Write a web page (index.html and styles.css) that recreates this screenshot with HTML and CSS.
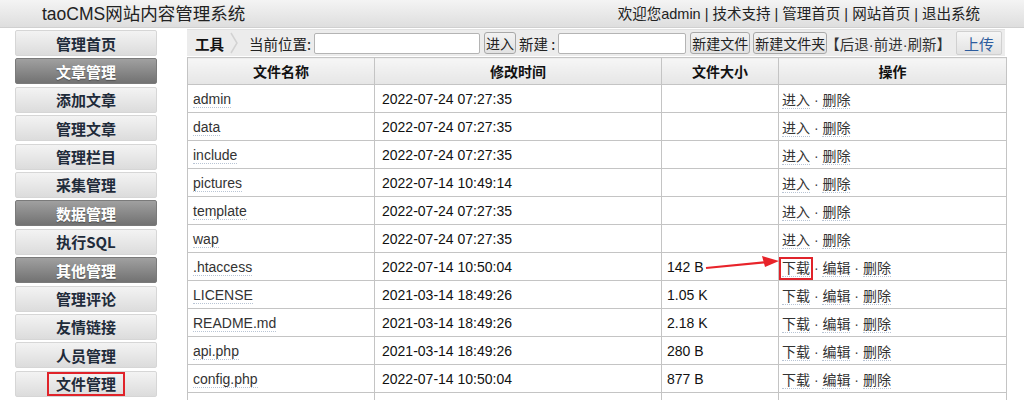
FILE: index.html
```html
<!DOCTYPE html>
<html lang="zh-CN">
<head>
<meta charset="utf-8">
<title>taoCMS网站内容管理系统</title>
<link rel="stylesheet" href="styles.css">
</head>
<body>
<div class="page">
  <header class="top">
    <h1 class="logo">taoCMS网站内容管理系统</h1>
    <nav class="toplinks">欢迎您admin | <a>技术支持</a> | <a>管理首页</a> | <a>网站首页</a> | <a>退出系统</a></nav>
  </header>
  <div class="wrap">
    <aside class="side">
      <a class="item">管理首页</a>
      <a class="item dark">文章管理</a>
      <a class="item">添加文章</a>
      <a class="item">管理文章</a>
      <a class="item">管理栏目</a>
      <a class="item">采集管理</a>
      <a class="item dark">数据管理</a>
      <a class="item">执行SQL</a>
      <a class="item dark">其他管理</a>
      <a class="item">管理评论</a>
      <a class="item">友情链接</a>
      <a class="item">人员管理</a>
      <a class="item"><span class="mark">文件管理</span></a>
    </aside>
    <main class="main">
      <div class="toolbar">
        <b class="tool">工具</b>
        <svg class="chev" width="10" height="26" viewBox="0 0 10 26"><polyline points="2,3 8,13 2,23" fill="none" stroke="#d2d2d2" stroke-width="1.5"/></svg>
        <span class="lbl">当前位置:</span>
        <input class="inp path" type="text">
        <button class="btn">进入</button>
        <span class="lbl">新建 :</span>
        <input class="inp name" type="text">
        <button class="btn">新建文件</button>
        <button class="btn">新建文件夹</button>
        <span class="nav">【后退·前进·刷新】</span>
        <button class="upload">上传</button>
      </div>
      <table class="files">
        <thead>
          <tr><th class="c1">文件名称</th><th class="c2">修改时间</th><th class="c3">文件大小</th><th class="c4">操作</th></tr>
        </thead>
        <tbody>
          <tr><td><a>admin</a></td><td>2022-07-24 07:27:35</td><td></td><td><a>进入</a> · <a>删除</a></td></tr>
          <tr><td><a>data</a></td><td>2022-07-24 07:27:35</td><td></td><td><a>进入</a> · <a>删除</a></td></tr>
          <tr><td><a>include</a></td><td>2022-07-24 07:27:35</td><td></td><td><a>进入</a> · <a>删除</a></td></tr>
          <tr><td><a>pictures</a></td><td>2022-07-14 10:49:14</td><td></td><td><a>进入</a> · <a>删除</a></td></tr>
          <tr><td><a>template</a></td><td>2022-07-24 07:27:35</td><td></td><td><a>进入</a> · <a>删除</a></td></tr>
          <tr><td><a>wap</a></td><td>2022-07-24 07:27:35</td><td></td><td><a>进入</a> · <a>删除</a></td></tr>
          <tr><td><a>.htaccess</a></td><td>2022-07-14 10:50:04</td><td>142 B</td><td><a class="mark2">下载</a> · <a>编辑</a> · <a>删除</a></td></tr>
          <tr><td><a>LICENSE</a></td><td>2021-03-14 18:49:26</td><td>1.05 K</td><td><a>下载</a> · <a>编辑</a> · <a>删除</a></td></tr>
          <tr><td><a>README.md</a></td><td>2021-03-14 18:49:26</td><td>2.18 K</td><td><a>下载</a> · <a>编辑</a> · <a>删除</a></td></tr>
          <tr><td><a>api.php</a></td><td>2021-03-14 18:49:26</td><td>280 B</td><td><a>下载</a> · <a>编辑</a> · <a>删除</a></td></tr>
          <tr><td><a>config.php</a></td><td>2022-07-14 10:50:04</td><td>877 B</td><td><a>下载</a> · <a>编辑</a> · <a>删除</a></td></tr>
          <tr><td></td><td></td><td></td><td></td></tr>
        </tbody>
      </table>
    </main>
  </div>
  <svg class="arrow" width="90" height="24" viewBox="0 0 90 24">
    <line x1="2" y1="15" x2="64" y2="9" stroke="#e8232a" stroke-width="2.2"/>
    <polygon points="75,8 58,3 61,14" fill="#e8232a"/>
  </svg>
</div>
</body>
</html>
```

FILE: styles.css
```css
html, body {
  margin: 0;
  padding: 0;
  background: #fff;
  overflow: hidden;
}
body {
  font-family: "Liberation Sans", "Noto Sans CJK SC", Arial, sans-serif;
  color: #222;
}
.page {
  position: relative;
  width: 1024px;
  height: 400px;
  overflow: hidden;
}
a { color: inherit; text-decoration: none; }

.top {
  height: 28px;
  display: flex;
  align-items: center;
  justify-content: space-between;
  background: linear-gradient(#f4f4f4, #dedede);
  border-bottom: 1px solid #d0d0d0;
  box-sizing: border-box;
  padding: 0 44px 0 42px;
}
.logo {
  margin: 0;
  font-size: 17.5px;
  font-weight: normal;
  color: #222;
  line-height: 28px;
}
.toplinks {
  font-size: 14.5px;
  color: #222;
  line-height: 28px;
}

.wrap {
  display: flex;
  padding-top: 1px;
}
.side {
  width: 142px;
  margin-left: 15px;
  margin-top: 1px;
  display: flex;
  flex-direction: column;
  gap: 2.4px;
}
.item {
  height: 26px;
  box-sizing: border-box;
  display: flex;
  align-items: center;
  justify-content: center;
  font-family: "Noto Sans CJK SC", "Liberation Sans", sans-serif;
  font-weight: bold;
  font-size: 15px;
  color: #1f2b3a;
  background: linear-gradient(#f3f3f3, #dcdcdc);
  border: 1px solid #d6d6d6;
  border-radius: 2px;
}
.item.dark {
  color: #fff;
  background: linear-gradient(#a0a0a0, #727272);
  border-color: #7a7a7a;
  text-shadow: 0 1px 1px rgba(0,0,0,0.35);
}
.mark {
  border: 2px solid #e0232a;
  padding: 0 7px;
  line-height: 20px;
}

.main {
  margin-left: 30px;
  width: 818px;
}
.toolbar {
  height: 27px;
  box-sizing: border-box;
  background: #ececec;
  border-top: 1px solid #e2e2e2;
  display: flex;
  align-items: center;
  padding-left: 8px;
  font-size: 14.5px;
  color: #222;
  font-family: "Noto Sans CJK SC", "Liberation Sans", sans-serif;
  white-space: nowrap;
}
.toolbar > * { flex-shrink: 0; }
.tool {
  font-size: 14.5px;
  color: #111;
  margin-right: 5px;
}
.chev { margin-right: 10px; }
.lbl { margin-right: 3px; }
.inp {
  height: 21px;
  box-sizing: border-box;
  border: 1px solid #b4b4b4;
  border-radius: 2px;
  background: #fff;
  padding: 0;
  margin: 0 4px 0 0;
}
.inp.path { width: 166px; }
.inp.name { width: 128px; }
.btn {
  height: 22px;
  box-sizing: border-box;
  padding: 0 1px;
  margin: 0 3px 0 0;
  border: 1px solid #a8a8a8;
  border-radius: 3px;
  background: linear-gradient(#f2f2f2, #e2e2e2);
  font-family: "Noto Sans CJK SC", sans-serif;
  font-size: 14px;
  color: #222;
  line-height: 18px;
  white-space: nowrap;
}
.nav {
  font-family: "Liberation Sans", "Noto Sans CJK SC", sans-serif;
  font-size: 14.5px;
  color: #333;
  margin-left: -5px;
}
.upload {
  margin-left: 5px;
  height: 24px;
  width: 46px;
  box-sizing: border-box;
  border: 1px solid #d0d0d0;
  border-radius: 2px;
  background: linear-gradient(#f6f6f6, #e2e2e2);
  color: #2d5c9e;
  font-family: "Noto Sans CJK SC", sans-serif;
  font-size: 15px;
  padding: 0;
}

.files {
  margin-top: 1px;
  width: 819px;
  border-collapse: collapse;
  table-layout: fixed;
  font-size: 14px;
}
.files th, .files td {
  border: 1px solid #c4c4c4;
  padding: 0 5px;
  text-align: left;
  white-space: nowrap;
}
.files th {
  height: 26px;
  text-align: center;
  font-family: "Noto Sans CJK SC", sans-serif;
  font-weight: bold;
  font-size: 14px;
  color: #111;
  background: linear-gradient(#f6f6f6, #e6e6e6);
}
.files td {
  height: 27px;
  color: #111;
}
.files td:nth-child(2) { padding-left: 7px; }
.files td:nth-child(4) { padding-left: 3px; color: #444; }
.files td a {
  color: #333;
  border-bottom: 1px dotted #b8c4d4;
}
.c1 { width: 176px; }
.c2 { width: 276px; }
.c3 { width: 106px; }
.c4 { width: 217px; }
.mark2 {
  outline: 2px solid #e0232a;
  outline-offset: 1px;
}

.arrow {
  position: absolute;
  left: 704px;
  top: 253px;
}
```
